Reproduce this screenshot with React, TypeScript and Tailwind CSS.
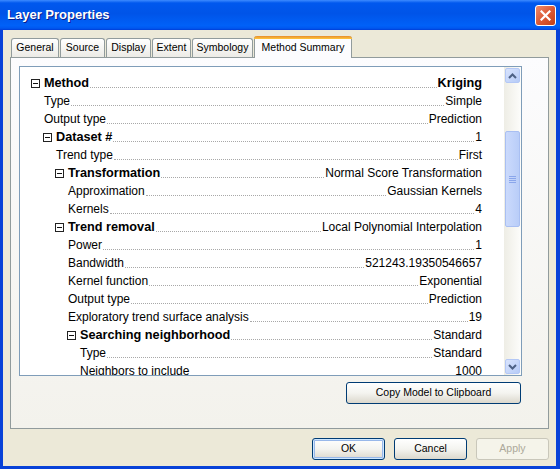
import React from 'react';

type Row = {
    label: string;
    value: string;
    level: number;
    header?: boolean;
    boldValue?: boolean;
};

const rows: Row[] = [
    { label: 'Method', value: 'Kriging', level: 0, header: true, boldValue: true },
    { label: 'Type', value: 'Simple', level: 0 },
    { label: 'Output type', value: 'Prediction', level: 0 },
    { label: 'Dataset #', value: '1', level: 1, header: true },
    { label: 'Trend type', value: 'First', level: 1 },
    { label: 'Transformation', value: 'Normal Score Transformation', level: 2, header: true },
    { label: 'Approximation', value: 'Gaussian Kernels', level: 2 },
    { label: 'Kernels', value: '4', level: 2 },
    { label: 'Trend removal', value: 'Local Polynomial Interpolation', level: 2, header: true },
    { label: 'Power', value: '1', level: 2 },
    { label: 'Bandwidth', value: '521243.19350546657', level: 2 },
    { label: 'Kernel function', value: 'Exponential', level: 2 },
    { label: 'Output type', value: 'Prediction', level: 2 },
    { label: 'Exploratory trend surface analysis', value: '19', level: 2 },
    { label: 'Searching neighborhood', value: 'Standard', level: 3, header: true },
    { label: 'Type', value: 'Standard', level: 3 },
    { label: 'Neighbors to include', value: '1000', level: 3 },
];

const tabs = [
    { name: 'General', w: 'w-[48px]' },
    { name: 'Source', w: 'w-[45px]' },
    { name: 'Display', w: 'w-[45px]' },
    { name: 'Extent', w: 'w-[39px]' },
    { name: 'Symbology', w: 'w-[61px]' },
];

const indents = ['pl-[24px]', 'pl-[36px]', 'pl-[48px]', 'pl-[60px]'];
const boxIndents = ['pl-[11px]', 'pl-[23px]', 'pl-[35px]', 'pl-[47px]'];

function MinusBox() {
    return (
        <span className="w-[9px] h-[9px] border border-[#222] bg-white flex items-center justify-center mr-[4px] shrink-0">
            <span className="w-[5px] h-[1px] bg-[#111]" />
        </span>
    );
}

function TreeRow({ row }: { row: Row }) {
    return (
        <div className={`flex h-[18px] leading-[18px] pr-[22px] ${row.header ? boxIndents[row.level] : indents[row.level]}`}>
            {row.header && (
                <div className="flex items-center h-[18px]">
                    <MinusBox />
                </div>
            )}
            <span className={`whitespace-nowrap ${row.header ? 'font-bold text-[12.7px]' : 'text-[12px]'}`}>{row.label}</span>
            <div className="flex-1 self-end mb-[4px] mx-[1px] h-0 border-b border-dotted border-[#a8a8a8]" />
            <span className={`whitespace-nowrap ${row.boldValue ? 'font-bold text-[12.7px]' : 'text-[12px]'}`}>{row.value}</span>
        </div>
    );
}

function Chevron({ up }: { up?: boolean }) {
    return (
        <svg width="9" height="6" viewBox="0 0 9 6">
            <path
                d={up ? 'M1 5 L4.5 1.5 L8 5' : 'M1 1 L4.5 4.5 L8 1'}
                fill="none"
                stroke="#4d6185"
                strokeWidth="2"
            />
        </svg>
    );
}

function ScrollButton({ up }: { up?: boolean }) {
    return (
        <div className="h-[17px] p-[1px] shrink-0">
            <div className="h-full rounded-[2px] border border-[#b4c8f6] bg-linear-to-br from-[#d9e4fd] to-[#b6cbf7] flex items-center justify-center">
                <Chevron up={up} />
            </div>
        </div>
    );
}

function Scrollbar() {
    return (
        <div className="w-[17px] h-full flex flex-col bg-linear-to-r from-[#eeede5] to-[#fdfdfb]">
            <ScrollButton up />
            <div className="flex-1">
                <div className="mt-[47px] h-[96px] mx-[1px] rounded-[2px] border border-[#a9bff2] bg-linear-to-r from-[#cbdafc] to-[#b9cdf8] flex flex-col items-center justify-center gap-[1px]">
                    <span className="w-[7px] h-[1px] bg-[#8aa6eb]" />
                    <span className="w-[7px] h-[1px] bg-[#8aa6eb]" />
                    <span className="w-[7px] h-[1px] bg-[#8aa6eb]" />
                    <span className="w-[7px] h-[1px] bg-[#8aa6eb]" />
                </div>
            </div>
            <ScrollButton />
        </div>
    );
}

function XpButton({ label, def, disabled, w }: { label: string; def?: boolean; disabled?: boolean; w: string }) {
    if (disabled) {
        return (
            <div className={`${w} h-[22px] rounded-[3px] border border-[#c9c7ba] bg-[#f5f4ea] flex items-center justify-center text-[10.5px] text-[#aca899]`}>
                {label}
            </div>
        );
    }
    return (
        <div className={`${w} h-[22px] rounded-[3px] border border-[#003c74] bg-linear-to-b from-[#ffffff] via-[#f4f4f0] to-[#dcd8cd] flex items-center justify-center text-[10.5px] text-black ${def ? 'shadow-[inset_0_0_0_1px_#cee7ff,inset_0_0_0_2px_#98b8ea]' : ''}`}>
            {label}
        </div>
    );
}

export default function App() {
    return (
        <div
            className="w-[560px] h-[469px] flex flex-col bg-[#0842d8] select-none"
            style={{ fontFamily: '"Liberation Sans", Arial, sans-serif' }}
        >
            {/* Title bar */}
            <div className="h-[30px] shrink-0 relative flex items-center pl-[7px] bg-[linear-gradient(180deg,#3d8bff_0%,#0058ee_10%,#0054e8_45%,#0061f8_85%,#0058f0_94%,#003dd7_100%)]">
                <span className="text-white font-bold text-[13px] [text-shadow:1px_1px_0_#0a1e8a]">Layer Properties</span>
                <div className="absolute left-[535px] top-[5px] w-[21px] h-[21px] rounded-[3px] border border-white bg-linear-to-br from-[#ee8a6b] via-[#dc5a36] to-[#c23f16] flex items-center justify-center">
                    <svg width="11" height="11" viewBox="0 0 11 11">
                        <path d="M1.5 1.5 L9.5 9.5 M9.5 1.5 L1.5 9.5" stroke="white" strokeWidth="2.2" strokeLinecap="square" />
                    </svg>
                </div>
            </div>

            {/* Body */}
            <div className="flex-1 ml-[3px] mr-[4px] mb-[3px] bg-[#ece9d8] flex flex-col px-[7px] pt-[6px]">
                {/* Tabs */}
                <div className="h-[21px] flex items-end pl-[1px] gap-[1px]">
                    {tabs.map(t => (
                        <div
                            key={t.name}
                            className={`${t.w} h-[19px] rounded-t-[3px] border border-b-0 border-[#919b9c] bg-linear-to-b from-[#ffffff] to-[#ecebe6] flex items-center justify-center text-[10.5px] text-black`}
                        >
                            {t.name}
                        </div>
                    ))}
                    <div className="w-[98px] h-[22px] -mb-[1px] relative z-10 rounded-t-[3px] border-x border-[#919b9c] bg-[#fcfcfe] flex flex-col">
                        <div className="h-[3px] rounded-t-[3px] bg-linear-to-b from-[#e68b2c] to-[#ffc83c] -mx-[1px]" />
                        <div className="flex-1 flex items-center justify-center text-[10.5px] text-black pb-[1px]">Method Summary</div>
                    </div>
                </div>

                {/* Panel */}
                <div className="h-[372px] border border-[#919b9c] bg-linear-to-b from-[#fcfcfe] to-[#f3f2ec] pl-[8px] pt-[8px]">
                    <div className="w-[503px] h-[310px] border border-[#7f9db9] bg-white flex">
                        <div className="flex-1 overflow-hidden pt-[7px] text-black">
                            {rows.map((r, i) => (
                                <TreeRow key={i} row={r} />
                            ))}
                        </div>
                        <Scrollbar />
                    </div>
                    <div className="w-[503px] flex justify-end mt-[6px]">
                        <div className="mr-[1px]">
                            <XpButton label="Copy Model to Clipboard" w="w-[175px]" />
                        </div>
                    </div>
                </div>

                {/* Bottom buttons */}
                <div className="mt-[9px] flex justify-end gap-[9px] pr-[-1px]">
                    <XpButton label="OK" def w="w-[73px]" />
                    <XpButton label="Cancel" w="w-[73px]" />
                    <XpButton label="Apply" disabled w="w-[73px]" />
                </div>
            </div>
        </div>
    );
}
